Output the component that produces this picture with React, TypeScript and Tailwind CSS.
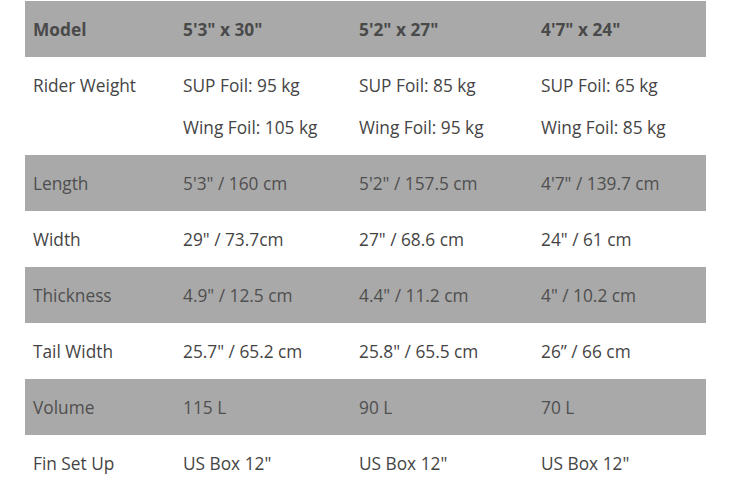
const rows: { label: string; values: string[][]; shaded?: boolean }[] = [
  {
    label: "Rider Weight",
    values: [
      ["SUP Foil: 95 kg", "Wing Foil: 105 kg"],
      ["SUP Foil: 85 kg", "Wing Foil: 95 kg"],
      ["SUP Foil: 65 kg", "Wing Foil: 85 kg"],
    ],
  },
  { label: "Length", values: [["5'3\" / 160 cm"], ["5'2\" / 157.5 cm"], ["4'7\" / 139.7 cm"]], shaded: true },
  { label: "Width", values: [["29\" / 73.7cm"], ["27\" / 68.6 cm"], ["24\" / 61 cm"]] },
  { label: "Thickness", values: [["4.9\" / 12.5 cm"], ["4.4\" / 11.2 cm"], ["4\" / 10.2 cm"]], shaded: true },
  { label: "Tail Width", values: [["25.7\" / 65.2 cm"], ["25.8\" / 65.5 cm"], ["26\u201d / 66 cm"]] },
  { label: "Volume", values: [["115 L"], ["90 L"], ["70 L"]], shaded: true },
  { label: "Fin Set Up", values: [["US Box 12\""], ["US Box 12\""], ["US Box 12\""]] },
];

const cols = "grid grid-cols-[150px_176px_182px_1fr]";
const cell = "px-2 pt-[15px] pb-[13px] leading-7";

export default function App() {
  return (
    <div className="min-h-screen bg-white pt-px font-['Open_Sans',sans-serif] text-[17.3px] text-[#444444]">
      <div className="ml-[25px] w-[681px]">
        <div className={`${cols} bg-[#a9a9a9] font-bold text-[#4a4a4a]`}>
          {["Model", "5'3\" x 30\"", "5'2\" x 27\"", "4'7\" x 24\""].map((h) => (
            <div key={h} className={cell}>
              {h}
            </div>
          ))}
        </div>
        {rows.map((row) => (
          <div key={row.label} className={`${cols} ${row.shaded ? "bg-[#a9a9a9] text-[#4f4f4f]" : ""}`}>
            <div className={cell}>{row.label}</div>
            {row.values.map((lines, i) => (
              <div key={i} className={`flex flex-col gap-3.5 ${cell}`}>
                {lines.map((line) => (
                  <p key={line}>{line}</p>
                ))}
              </div>
            ))}
          </div>
        ))}
      </div>
    </div>
  );
}
